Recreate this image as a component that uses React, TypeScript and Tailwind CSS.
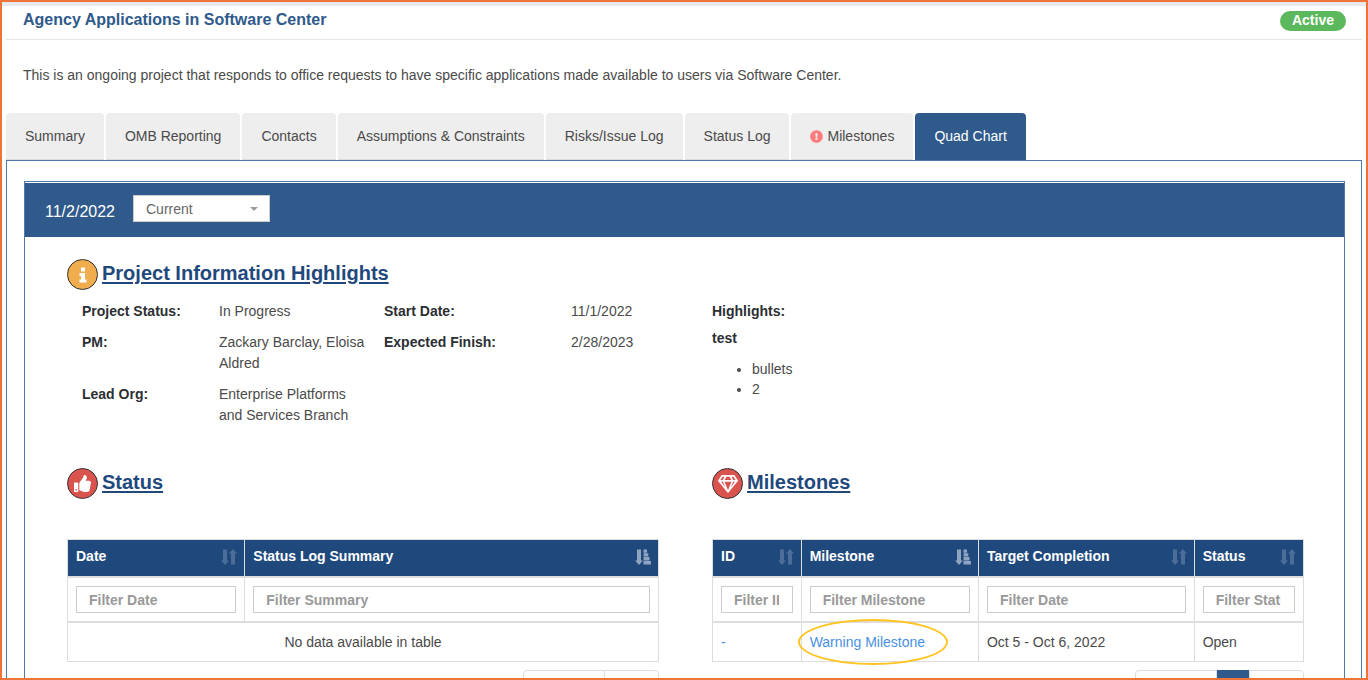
import React, { useState } from "react";
import clsx from "clsx";
import { FaExclamationCircle, FaRegGem, FaThumbsUp } from "react-icons/fa";

const tabs = [
  "Summary",
  "OMB Reporting",
  "Contacts",
  "Assumptions & Constraints",
  "Risks/Issue Log",
  "Status Log",
  "Milestones",
  "Quad Chart",
];

type Column = {
  title: string;
  filter: string;
  width: string;
  sorted?: boolean;
};

const statusColumns: Column[] = [
  { title: "Date", filter: "Filter Date", width: "w-[30%]" },
  { title: "Status Log Summary", filter: "Filter Summary", width: "w-[70%]", sorted: true },
];

const milestoneColumns: Column[] = [
  { title: "ID", filter: "Filter ID", width: "w-[15%]" },
  { title: "Milestone", filter: "Filter Milestone", width: "w-[30%]", sorted: true },
  { title: "Target Completion", filter: "Filter Date", width: "w-[36.5%]" },
  { title: "Status", filter: "Filter Status", width: "w-[18.5%]" },
];

const SortIcon: React.FC<{ sorted?: boolean }> = ({ sorted }) => (
  <svg
    viewBox="0 0 16 16"
    fill="white"
    className={clsx("h-4 w-4 shrink-0", sorted ? "opacity-50" : "opacity-20")}
  >
    <path d="M2 0.5h4v11h2l-4 4.5-4-4.5h2z" />
    {sorted ? (
      <path d="M8.5 0.5h3.5v3.2h-3.5zM8.5 4.3h4.8v3.2h-4.8zM8.5 8.1h6v3.4h-6zM8.5 12.1h7.5v3.4h-7.5z" />
    ) : (
      <path d="M10 15.5h4v-11h2l-4-4.5-4 4.5h2z" />
    )}
  </svg>
);

const SectionHeading: React.FC<{
  title: string;
  color: string;
  children: React.ReactNode;
}> = ({ title, color, children }) => (
  <div className="flex items-start gap-1">
    <span
      className={clsx(
        "flex h-[31px] w-[31px] items-center justify-center rounded-full border border-[#333] text-white",
        color
      )}
    >
      {children}
    </span>
    <h2 className="text-xl font-bold leading-7 text-[#1f497d] underline decoration-2 underline-offset-2">
      {title}
    </h2>
  </div>
);

const DataTable: React.FC<{
  label: string;
  columns: Column[];
  children: React.ReactNode;
}> = ({ label, columns, children }) => (
  <table
    aria-label={label}
    className="w-full table-fixed border-separate border-spacing-0 border-l border-t border-[#ddd] text-left"
  >
    <thead>
      <tr>
        {columns.map((column) => (
          <th
            key={column.title}
            className={clsx(
              "h-[38px] border-b-2 border-r border-[#ddd] bg-[#1f497d] pb-[3px] pl-2 pr-[7px] font-bold text-white",
              column.width
            )}
          >
            <div className="flex items-center justify-between">
              {column.title}
              <SortIcon sorted={column.sorted} />
            </div>
          </th>
        ))}
      </tr>
      <tr>
        {columns.map((column) => (
          <th key={column.title} className="h-[45px] border-b-2 border-r border-[#ddd] px-2">
            <input
              type="text"
              aria-label={column.filter}
              placeholder={column.filter}
              className="block h-[27px] w-full border border-[#ccc] pl-3 pr-[13px] font-bold outline-none placeholder:text-[#999]"
            />
          </th>
        ))}
      </tr>
    </thead>
    <tbody>{children}</tbody>
  </table>
);

const App: React.FC = () => {
  const [activeTab, setActiveTab] = useState("Quad Chart");
  const cell = "h-[39px] border-b border-r border-[#ddd] px-2";

  return (
    <div className="h-screen overflow-hidden border-2 border-[#ed7338] bg-white font-['Liberation_Sans',Arial,sans-serif] text-sm leading-[21px] text-[#4a4a4a]">
      <div className="h-1 bg-[#e9e9ed]" />

      <div className="mx-1">
        <header className="flex h-[34px] items-start justify-between border-b border-[#e5e5e5] pl-[17px] pr-4 pt-[3px]">
          <h1 className="text-base font-bold leading-[22px] text-[#2f5a8b]">
            Agency Applications in Software Center
          </h1>
          <span className="mt-0.5 h-5 rounded-full bg-[#5cb85c] px-3 font-bold leading-[18px] text-white">
            Active
          </span>
        </header>

        <p className="mt-[25px] px-[17px]">
          This is an ongoing project that responds to office requests to have specific applications
          made available to users via Software Center.
        </p>

        {/* Tabs */}
        <nav role="tablist" className="mt-[27px] flex gap-0.5">
          {tabs.map((tab) => (
            <button
              key={tab}
              role="tab"
              aria-selected={tab === activeTab}
              onClick={() => setActiveTab(tab)}
              className={clsx(
                "flex h-[47px] items-center gap-1 rounded-t border-b px-[19px]",
                tab === activeTab
                  ? "border-[#2f5a8b] bg-[#2f5a8b] text-white"
                  : "border-[#ddd] bg-[#eee]"
              )}
            >
              {tab === "Milestones" && <FaExclamationCircle className="h-[13px] w-[13px] text-[#ff7b7b]" />}
              {tab}
            </button>
          ))}
        </nav>

        <main className="border border-[#4f79a8] pl-[17px] pr-4 pt-5">
          <div className="border border-[#4f79a8] pt-px">
            {/* Snapshot bar */}
            <div className="flex h-[54px] items-start bg-[#2f5a8b] pl-5 pt-3">
              <span className="pt-1.5 text-base leading-[22px] text-white">11/2/2022</span>
              <div className="relative ml-[18px]">
                <select
                  aria-label="Snapshot"
                  className="block h-[27px] w-[137px] appearance-none border border-[#ccc] bg-white pl-3 text-sm text-[#666]"
                >
                  <option>Current</option>
                </select>
                <svg viewBox="0 0 8 4" className="pointer-events-none absolute right-3 top-3 h-1 w-2">
                  <path d="M0 0h8l-4 4z" fill="#999" />
                </svg>
              </div>
            </div>

            <div className="grid grid-cols-2 gap-x-[53px] gap-y-[42px] pb-8 pl-[42px] pr-10 pt-[22px]">
              <section>
                <SectionHeading title="Project Information Highlights" color="bg-[#f0ad4e]">
                  <svg viewBox="0 0 8 16" fill="currentColor" className="h-4 w-2">
                    <path d="M2 0.5h4v4h-4zM0.5 6h5.5v6.5h1.5v3h-7v-3h1.5v-3.5h-1.5z" />
                  </svg>
                </SectionHeading>
                <dl className="mt-[11px] grid grid-cols-[137fr_165fr_187fr_88fr] gap-y-2.5 pl-[15px]">
                  <dt className="font-bold text-[#2b2f33]">Project Status:</dt>
                  <dd>In Progress</dd>
                  <dt className="font-bold text-[#2b2f33]">Start Date:</dt>
                  <dd>11/1/2022</dd>
                  <dt className="font-bold text-[#2b2f33]">PM:</dt>
                  <dd className="pr-3">Zackary Barclay, Eloisa Aldred</dd>
                  <dt className="font-bold text-[#2b2f33]">Expected Finish:</dt>
                  <dd>2/28/2023</dd>
                  <dt className="font-bold text-[#2b2f33]">Lead Org:</dt>
                  <dd className="pr-3">Enterprise Platforms and Services Branch</dd>
                </dl>
              </section>

              <section className="pt-[42px]">
                <p className="font-bold text-[#2b2f33]">Highlights:</p>
                <p className="mt-1.5 font-bold text-[#2b2f33]">test</p>
                <ul className="mt-2.5 list-disc pl-10 leading-5">
                  <li>bullets</li>
                  <li>2</li>
                </ul>
              </section>

              <section>
                <SectionHeading title="Status" color="bg-[#d9534f]">
                  <FaThumbsUp className="h-[17px] w-[17px]" />
                </SectionHeading>
                <div className="mt-10">
                  <DataTable label="Status" columns={statusColumns}>
                    <tr>
                      <td colSpan={2} className={clsx(cell, "text-center")}>
                        No data available in table
                      </td>
                    </tr>
                  </DataTable>
                </div>
                <div className="mt-2 flex justify-end">
                  <button aria-label="Previous" className="h-9 w-[82px] rounded-l border border-[#ddd]" />
                  <button aria-label="Next" className="-ml-px h-9 w-[55px] rounded-r border border-[#ddd]" />
                </div>
              </section>

              <section>
                <SectionHeading title="Milestones" color="bg-[#d9534f]">
                  <FaRegGem className="h-5 w-5" />
                </SectionHeading>
                <div className="mt-10">
                  <DataTable label="Milestones" columns={milestoneColumns}>
                    <tr>
                      <td className={cell}>
                        <a href="#" className="text-[#4a90e2]">-</a>
                      </td>
                      <td className={cell}>
                        <a href="#" className="relative whitespace-nowrap text-[#4a90e2]">
                          Warning Milestone
                          <span className="absolute -left-3 top-1/2 h-[46px] w-[150px] -translate-y-1/2 rounded-[50%] border-2 border-[#ffc41f]" />
                        </a>
                      </td>
                      <td className={cell}>Oct 5 - Oct 6, 2022</td>
                      <td className={cell}>Open</td>
                    </tr>
                  </DataTable>
                </div>
                <div className="mt-2 flex justify-end">
                  <button aria-label="Previous" className="h-9 w-[82px] rounded-l border border-[#ddd]" />
                  <button aria-label="Page 1" className="h-9 w-8 bg-[#2f5a8b]" />
                  <button aria-label="Next" className="h-9 w-[55px] rounded-r border border-[#ddd]" />
                </div>
              </section>
            </div>
          </div>
        </main>
      </div>
    </div>
  );
};

export default App;
